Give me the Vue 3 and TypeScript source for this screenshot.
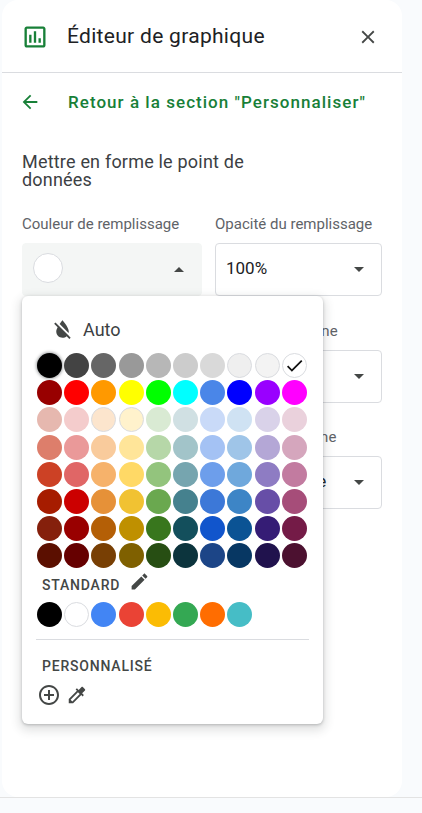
<script setup lang="ts">
const palette: string[][] = [
  ['#000000', '#434343', '#666666', '#999999', '#b7b7b7', '#cccccc', '#d9d9d9', '#efefef', '#f3f3f3', '#ffffff'],
  ['#980000', '#ff0000', '#ff9900', '#ffff00', '#00ff00', '#00ffff', '#4a86e8', '#0000ff', '#9900ff', '#ff00ff'],
  ['#e6b8af', '#f4cccc', '#fce5cd', '#fff2cc', '#d9ead3', '#d0e0e3', '#c9daf8', '#cfe2f3', '#d9d2e9', '#ead1dc'],
  ['#dd7e6b', '#ea9999', '#f9cb9c', '#ffe599', '#b6d7a8', '#a2c4c9', '#a4c2f4', '#9fc5e8', '#b4a7d6', '#d5a6bd'],
  ['#cc4125', '#e06666', '#f6b26b', '#ffd966', '#93c47d', '#76a5af', '#6d9eeb', '#6fa8dc', '#8e7cc3', '#c27ba0'],
  ['#a61c00', '#cc0000', '#e69138', '#f1c232', '#6aa84f', '#45818e', '#3c78d8', '#3d85c6', '#674ea7', '#a64d79'],
  ['#85200c', '#990000', '#b45f06', '#bf9000', '#38761d', '#134f5c', '#1155cc', '#0b5394', '#351c75', '#741b47'],
  ['#5b0f00', '#660000', '#783f04', '#7f6000', '#274e13', '#0c343d', '#1c4587', '#073763', '#20124d', '#4c1130'],
]
const standard: string[] = ['#000000', '#ffffff', '#4285f4', '#ea4335', '#fbbc04', '#34a853', '#ff6d01', '#46bdc6']
const outlined = new Set(['#efefef', '#f3f3f3', '#ffffff', '#fce5cd', '#fff2cc'])
const swatches = palette.flat()
</script>

<template>
  <div class="page">
    <main class="panel">
      <header class="head">
        <svg class="chart-icon" viewBox="0 0 24 24" width="28" height="28">
          <path d="M19 3H5c-1.1 0-2 .9-2 2v14c0 1.1.9 2 2 2h14c1.1 0 2-.9 2-2V5c0-1.1-.9-2-2-2zm0 16H5V5h14v14z" />
          <path d="M7 10h2v7H7zm4-3h2v10h-2zm4 6h2v4h-2z" />
        </svg>
        <h1 class="title">Éditeur de graphique</h1>
        <svg class="close" viewBox="0 0 24 24" width="22" height="22">
          <path d="M19 6.41L17.59 5 12 10.59 6.41 5 5 6.41 10.59 12 5 17.59 6.41 19 12 13.41 17.59 19 19 17.59 13.41 12z" />
        </svg>
      </header>

      <div class="back">
        <svg class="back-icon" viewBox="0 0 24 24" width="22" height="22">
          <path d="M20 11H7.83l5.59-5.59L12 4l-8 8 8 8 1.41-1.41L7.83 13H20v-2z" />
        </svg>
        <span class="back-text">Retour à la section "Personnaliser"</span>
      </div>

      <div class="body">
        <h2 class="section">Mettre en forme le point de données</h2>

        <div class="fields">
          <div class="field">
            <div class="label">Couleur de remplissage</div>
            <div class="select open">
              <span class="chip"></span>
              <span class="caret up"></span>
            </div>
          </div>
          <div class="field">
            <div class="label">Opacité du remplissage</div>
            <div class="select">
              <span class="value">100%</span>
              <span class="caret"></span>
            </div>
          </div>
          <div class="field">
            <div class="label"></div>
            <div class="select"><span class="caret"></span></div>
          </div>
          <div class="field">
            <div class="label">Opacité de la ligne</div>
            <div class="select">
              <span class="value">100%</span>
              <span class="caret"></span>
            </div>
          </div>
          <div class="field">
            <div class="label"></div>
            <div class="select"><span class="caret"></span></div>
          </div>
          <div class="field">
            <div class="label">Épaisseur de ligne</div>
            <div class="select">
              <span class="value wide">Automatique</span>
              <span class="caret"></span>
            </div>
          </div>
        </div>

        <div class="popup">
          <div class="auto">
            <svg class="auto-icon" viewBox="0 0 24 24" width="25" height="25">
              <path d="M18 14c0-4-6-10.8-6-10.8s-1.33 1.51-2.73 3.52l8.59 8.59c.09-.42.14-.86.14-1.31zm-.88 3.12L12.5 12.5 5.27 5.27 4 6.55l3.32 3.32C6.55 11.32 6 12.79 6 14c0 3.31 2.69 6 6 6 1.52 0 2.9-.57 3.96-1.5l2.63 2.63 1.27-1.27-2.74-2.74z" />
            </svg>
            <span class="auto-text">Auto</span>
          </div>

          <div class="grid">
            <span
              v-for="(c, i) in swatches"
              :key="i"
              class="swatch"
              :class="{ outline: outlined.has(c), active: i === 0 }"
              :style="{ background: c }"
            >
              <svg v-if="i === 9" viewBox="0 0 24 24" width="21" height="21">
                <path d="M9 16.17L4.83 12l-1.42 1.41L9 19 21 7l-1.41-1.41z" />
              </svg>
            </span>
          </div>

          <div class="heading standard-head">
            <span>STANDARD</span>
            <svg viewBox="0 0 24 24" width="21" height="21">
              <path d="M3 17.25V21h3.75L17.81 9.94l-3.75-3.75L3 17.25zM20.71 7.04c.39-.39.39-1.02 0-1.41l-2.34-2.34c-.39-.39-1.02-.39-1.41 0l-1.83 1.83 3.75 3.75 1.83-1.83z" />
            </svg>
          </div>

          <div class="grid standard-row">
            <span
              v-for="c in standard"
              :key="c"
              class="swatch"
              :class="{ outline: outlined.has(c) }"
              :style="{ background: c }"
            ></span>
          </div>

          <hr class="rule" />

          <div class="heading custom-head">PERSONNALISÉ</div>

          <div class="tools">
            <svg viewBox="0 0 24 24" width="24" height="24">
              <path d="M13 7h-2v4H7v2h4v4h2v-4h4v-2h-4V7zm-1-5C6.48 2 2 6.48 2 12s4.48 10 10 10 10-4.48 10-10S17.52 2 12 2zm0 18c-4.41 0-8-3.59-8-8s3.59-8 8-8 8 3.59 8 8-3.59 8-8 8z" />
            </svg>
            <svg viewBox="0 0 24 24" width="22" height="22">
              <path d="M20.71 5.63l-2.34-2.34c-.39-.39-1.02-.39-1.41 0l-3.12 3.12-1.93-1.91-1.41 1.41 1.42 1.42L3 16.25V21h4.75l8.92-8.92 1.42 1.42 1.41-1.41-1.92-1.92 3.12-3.12c.4-.4.4-1.03.01-1.42zM6.92 19L5 17.08l8.06-8.06 1.92 1.92L6.92 19z" />
            </svg>
          </div>
        </div>
      </div>
    </main>
    <footer class="foot"></footer>
  </div>
</template>

<style scoped>
.page {
  width: 422px;
  height: 813px;
  background: #f9fbfd;
  overflow: hidden;
  font-family: Roboto, "Liberation Sans", sans-serif;
  display: flex;
  flex-direction: column;
}
.panel {
  width: 400px;
  height: 797px;
  margin-left: 2px;
  background: #ffffff;
  border-radius: 16px;
  flex: none;
}
.foot {
  flex: none;
  height: 16px;
  border-top: 1px solid #e3e3e3;
  box-sizing: border-box;
}
.head {
  height: 73px;
  box-sizing: border-box;
  border-bottom: 1px solid #dadce0;
  display: flex;
  align-items: center;
  padding: 2px 16px 0 19px;
}
.chart-icon {
  fill: #188038;
  flex: none;
}
.title {
  margin: 0 0 2px 18px;
  font-size: 21px;
  font-weight: 400;
  color: #202124;
  letter-spacing: 0.3px;
  flex: 1;
}
.close {
  fill: #444746;
  flex: none;
  margin-right: 7px;
}
.back {
  height: 58px;
  display: flex;
  align-items: center;
  padding-left: 17px;
}
.back-icon {
  fill: #188038;
  flex: none;
}
.back-text {
  margin-left: 27px;
  font-size: 17px;
  font-weight: 500;
  letter-spacing: 1.04px;
  color: #188038;
}
.body {
  position: relative;
  padding: 22px 20px 0;
}
.section {
  margin: 0;
  width: 240px;
  font-size: 18px;
  line-height: 18px;
  font-weight: 400;
  letter-spacing: 0.2px;
  color: #3c4043;
}
.fields {
  margin-top: 25px;
  display: grid;
  grid-template-columns: 180px 167px;
  column-gap: 13px;
  row-gap: 24.5px;
}
.label {
  height: 29px;
  font-size: 15px;
  line-height: 20px;
  color: #5f6368;
  white-space: nowrap;
}
.select {
  box-sizing: border-box;
  height: 53px;
  border: 1px solid #dadce0;
  border-radius: 4px;
  display: flex;
  align-items: center;
  padding: 0 17px 0 10px;
  position: relative;
}
.select.open {
  background: #f4f6f5;
  border-color: #f4f6f5;
}
.chip {
  width: 30px;
  height: 30px;
  box-sizing: border-box;
  border-radius: 50%;
  background: #ffffff;
  border: 1px solid #dadce0;
  margin-bottom: 3px;
}
.value {
  font-size: 17px;
  color: #202124;
  margin-bottom: 3px;
}
.value.wide {
  letter-spacing: 0.3px;
}
.caret {
  margin-left: auto;
  width: 0;
  height: 0;
  border-left: 5px solid transparent;
  border-right: 5px solid transparent;
  border-top: 5px solid #444746;
}
.caret.up {
  border-top: 0;
  border-bottom: 5px solid #444746;
}
.popup {
  position: absolute;
  left: 20px;
  top: 165px;
  width: 301px;
  height: 428px;
  box-sizing: border-box;
  background: #ffffff;
  border-radius: 6px;
  box-shadow: 0 1px 3px rgba(60, 64, 67, 0.3), 0 4px 10px 3px rgba(60, 64, 67, 0.14);
  padding: 0 14px 0 15px;
  z-index: 2;
}
.auto {
  height: 57px;
  box-sizing: border-box;
  padding: 9px 0 0 13px;
  display: flex;
  align-items: center;
}
.auto-icon {
  fill: #444746;
  flex: none;
}
.auto-text {
  margin-left: 8px;
  font-size: 18px;
  color: #3c4043;
}
.grid {
  display: grid;
  grid-template-columns: repeat(10, 25px);
  grid-auto-rows: 25px;
  gap: 2.2px;
}
.swatch {
  display: flex;
  align-items: center;
  justify-content: center;
  box-sizing: border-box;
  border-radius: 50%;
}
.swatch.outline {
  border: 1px solid #dadce0;
}
.swatch.active {
  box-shadow: 0 0 3px 1px rgba(60, 64, 67, 0.45);
}
.swatch svg {
  fill: #111111;
  flex: none;
}
.heading {
  font-size: 14px;
  font-weight: 500;
  letter-spacing: 0.8px;
  color: #444746;
  padding-left: 5px;
}
.standard-head {
  height: 28px;
  margin-top: 3px;
  display: flex;
  align-items: center;
  gap: 9px;
}
.standard-head svg {
  fill: #444746;
  margin-bottom: 7px;
}
.standard-row {
  margin-top: 3px;
}
.rule {
  margin: 12px 0 0 -1px;
  border: 0;
  border-top: 1px solid #dadce0;
  width: 273px;
}
.custom-head {
  margin-top: 18px;
  line-height: 16px;
}
.tools {
  margin-top: 8px;
  height: 26px;
  display: flex;
  align-items: center;
  gap: 5px;
}
.tools svg {
  fill: #444746;
  flex: none;
}
</style>
